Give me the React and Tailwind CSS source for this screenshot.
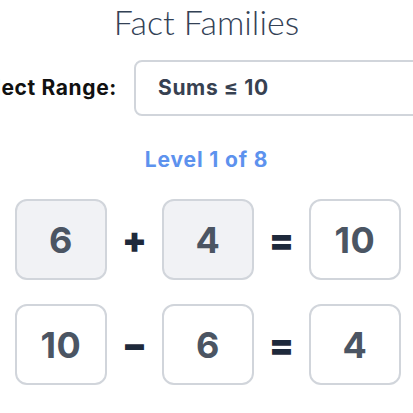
import React from 'react';

const bold = { fontFamily: 'Inter, "Noto Sans", sans-serif' };

// One number tile in an equation
const Tile = ({ value, shaded }) => (
  <div
    className={`flex-none w-[92px] h-[81px] rounded-xl border-2 border-[#d1d5db] flex items-center justify-center text-[36px] font-bold tracking-[0.02em] text-[#4b5563] ${
      shaded ? 'bg-[#f1f2f5]' : 'bg-white'
    }`}
  >
    {value}
  </div>
);

const Op = ({ sign }) => (
  <div className="flex-none w-[55px] flex items-center justify-center text-[36px] leading-none font-black text-[#1e293b]">
    {sign}
  </div>
);

const Equation = ({ a, op, b, c, shaded }) => (
  <div className="flex items-center justify-center">
    <Tile value={a} shaded={shaded} />
    <Op sign={op} />
    <Tile value={b} shaded={shaded} />
    <Op sign="=" />
    <Tile value={c} />
  </div>
);

export default function App() {
  return (
    <div className="w-full h-[413px] overflow-hidden bg-white flex flex-col items-center" style={bold}>
      {/* Title */}
      <h1
        className="pt-[2px] text-[34px] leading-[40px] font-light text-[#334155]"
        style={{ fontFamily: 'Lato, "Noto Sans", sans-serif' }}
      >
        Fact Families
      </h1>

      {/* Range picker */}
      <div className="mt-[18px] flex items-center justify-center gap-[17px] w-full">
        <label className="flex-none w-[150px] text-right whitespace-nowrap text-[21px] font-bold tracking-[0.03em] text-[#111111]">
          Select Range:
        </label>
        <div className="flex-none w-[312px] h-[56px] rounded-lg border-2 border-[#d1d5db] bg-white flex items-center pl-[22px] text-[21px] font-bold tracking-[0.03em] text-[#374151]">
          Sums ≤ 10
        </div>
      </div>

      {/* Level indicator */}
      <p className="mt-[30px] text-[21px] leading-[28px] font-bold tracking-[0.04em] text-[#5d92ee]">Level 1 of 8</p>

      {/* Equations */}
      <div className="mt-[25px] flex flex-col gap-[24px] pl-[3px]">
        <Equation a="6" op="+" b="4" c="10" shaded />
        <Equation a="10" op="−" b="6" c="4" />
      </div>
    </div>
  );
}
